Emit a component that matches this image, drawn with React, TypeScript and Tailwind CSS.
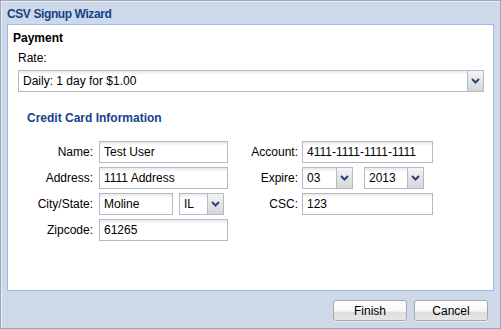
const inputCls =
  "h-[22px] border border-[#b5b8c8] bg-[linear-gradient(to_bottom,#e9e9e9,#ffffff_4px)] pl-[4px] flex items-center text-[12px] text-black";

function Chevron() {
  return (
    <svg width="9" height="6" viewBox="0 0 9 6" className="block">
      <path d="M1 1 L4.5 4.5 L8 1" fill="none" stroke="#26457a" strokeWidth="2" />
    </svg>
  );
}

function TextBox({ value, width }: { value: string; width: string }) {
  return <div className={`${inputCls} ${width}`}>{value}</div>;
}

function Combo({ value, width }: { value: string; width: string }) {
  return (
    <div className={`flex h-[22px] ${width}`}>
      <div className="flex-1 h-[22px] border border-r-0 border-[#b5b8c8] bg-[linear-gradient(to_bottom,#e9e9e9,#ffffff_4px)] pl-[4px] flex items-center text-[12px] text-black">
        {value}
      </div>
      <div className="w-[17px] h-[22px] border border-[#b5b8c8] bg-[linear-gradient(to_bottom,#f4f4f4,#d6d6d6)] flex justify-center pt-[7px]">
        <Chevron />
      </div>
    </div>
  );
}

function Label({ text, width }: { text: string; width: string }) {
  return <div className={`${width} text-right text-[12px] text-black leading-[22px]`}>{text}</div>;
}

function Button({ text }: { text: string }) {
  return (
    <div className="w-[74px] h-[21px] rounded-[3px] border border-[#a8a8a8] bg-[linear-gradient(to_bottom,#ffffff,#f6f6f6_55%,#dedede_56%,#e6e6e6)] flex items-center justify-center text-[12px] text-black shadow-[0_1px_0_#e8eef5]">
      {text}
    </div>
  );
}

export default function App() {
  return (
    <div className="w-[501px] h-[329px] bg-[#cdd9e8] border border-[#98a6b8] shadow-[inset_1px_1px_0_#e7eef6] flex flex-col font-['Liberation_Sans',Arial,sans-serif]">
      {/* Header */}
      <div className="h-[23px] pl-[6px] flex items-center pt-[2px]">
        <span className="text-[12px] font-bold tracking-[-0.4px] text-[#15428b]">CSV Signup Wizard</span>
      </div>

      {/* Body */}
      <div className="mx-[6px] h-[267px] border border-[#99bbe8] bg-white">
        <div className="pt-[6px] pl-[5px] text-[12px] font-bold text-black leading-[14px]">Payment</div>
        <div className="pl-[10px] pr-[8px]">
          <div className="mt-[6px] text-[12px] leading-[14px] text-black">Rate:</div>
          <div className="mt-[5px]">
            <Combo value="Daily: 1 day for $1.00" width="w-[466px]" />
          </div>

          <div className="mt-[19px] pl-[9px]">
            <div className="text-[12px] font-bold leading-[14px] text-[#15428b]">Credit Card Information</div>
            <div className="mt-[16px] flex flex-col gap-[4px]">
              <div className="flex">
                <div className="w-[205px] flex gap-[6px]">
                  <Label text="Name:" width="w-[66px]" />
                  <TextBox value="Test User" width="w-[129px]" />
                </div>
                <div className="flex gap-[4px]">
                  <Label text="Account:" width="w-[66px]" />
                  <TextBox value="4111-1111-1111-1111" width="w-[131px]" />
                </div>
              </div>
              <div className="flex">
                <div className="w-[205px] flex gap-[6px]">
                  <Label text="Address:" width="w-[66px]" />
                  <TextBox value="1111 Address" width="w-[129px]" />
                </div>
                <div className="flex gap-[4px]">
                  <Label text="Expire:" width="w-[66px]" />
                  <div className="flex gap-[11px]">
                    <Combo value="03" width="w-[51px]" />
                    <Combo value="2013" width="w-[60px]" />
                  </div>
                </div>
              </div>
              <div className="flex">
                <div className="w-[205px] flex gap-[6px]">
                  <Label text="City/State:" width="w-[66px]" />
                  <div className="flex gap-[6px]">
                    <TextBox value="Moline" width="w-[74px]" />
                    <Combo value="IL" width="w-[45px]" />
                  </div>
                </div>
                <div className="flex gap-[4px]">
                  <Label text="CSC:" width="w-[66px]" />
                  <TextBox value="123" width="w-[131px]" />
                </div>
              </div>
              <div className="flex">
                <div className="w-[205px] flex gap-[6px]">
                  <Label text="Zipcode:" width="w-[66px]" />
                  <TextBox value="61265" width="w-[129px]" />
                </div>
              </div>
            </div>
          </div>
        </div>
      </div>

      {/* Footer */}
      <div className="flex justify-end gap-[7px] pr-[12px] pt-[9px]">
        <Button text="Finish" />
        <Button text="Cancel" />
      </div>
    </div>
  );
}
